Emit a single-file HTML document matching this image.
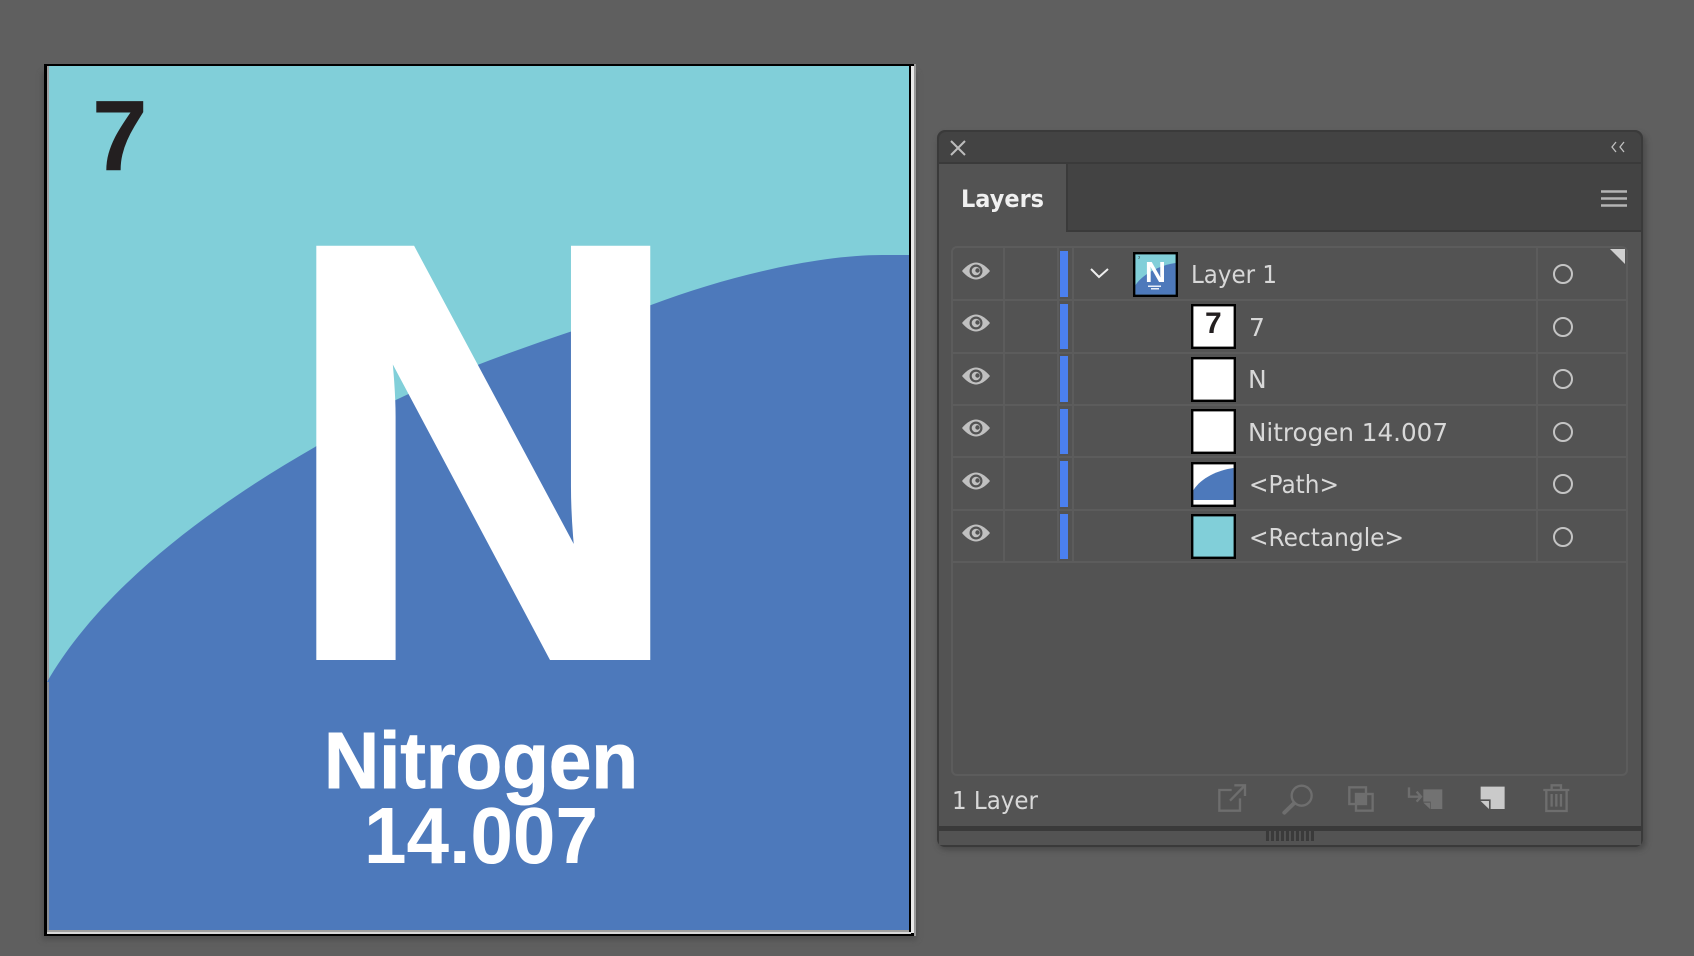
<!DOCTYPE html>
<html><head><meta charset="utf-8"><title>Layers</title>
<style>
html,body{margin:0;padding:0;width:1694px;height:956px;overflow:hidden;background:#5f5f5f}
svg{display:block}
.t{font-family:"DejaVu Sans",sans-serif;font-size:25px;fill:#d8d8d8}
.a{font-family:"Liberation Sans",Arial,sans-serif;font-weight:700;fill:#fff}
</style></head><body>
<svg width="1694" height="956" viewBox="0 0 1694 956" xmlns="http://www.w3.org/2000/svg">
<defs>
<filter id="b" x="-5%" y="-5%" width="110%" height="110%"><feGaussianBlur stdDeviation="3"/></filter>
<g id="eye">
<path d="M-14 0C-9-6-4-8.500 0-8.500S9-6 14 0C9 6 4 8.500 0 8.500S-9 6-14 0Z" fill="#c0c0c0"/>
<circle r="6.500" fill="#535353"/>
<circle r="4.300" fill="#c0c0c0"/>
<circle cx="1.500" cy="-0.500" r="2.200" fill="#535353"/>
</g>
<path id="curve" d="M47 682C100 590 205 510 315 447C400 385 545 340 651 305C730 275 820 255 882 255L909 255V931H47Z"/>
</defs>
<rect width="1694" height="956" fill="#5f5f5f"/>

<!-- artboard -->
<rect x="42" y="72" width="875" height="868" fill="#4a4a4a" filter="url(#b)" opacity=".7"/>
<rect x="44" y="64" width="871" height="872" fill="#000"/>
<rect x="911" y="66" width="3" height="867" fill="#e8e8e8"/>
<rect x="914" y="64" width="2" height="872" fill="#9a9a9a"/>
<rect x="47" y="66" width="862" height="865" fill="#81cfd9"/>
<rect x="47" y="66" width="2" height="865" fill="#a0a0a0"/>
<rect x="47" y="932" width="864" height="2" fill="#d8d8d8"/>
<use href="#curve" fill="#4d79bb"/>
<rect x="47" y="682" width="2" height="249" fill="#8b8f96"/>
<rect x="47" y="930" width="862" height="2" fill="#a0a0a0"/>
<text class="a" x="92" y="170" font-size="100" style="fill:#231f20">7</text>
<text class="a" transform="translate(283.500,655.500) scale(.94,1)" font-size="589" stroke="#fff" stroke-width="9" stroke-linejoin="miter">N</text>
<text class="a" x="324" y="788" font-size="80" textLength="314" lengthAdjust="spacingAndGlyphs" stroke="#fff" stroke-width="1">Nitrogen</text>
<text class="a" x="364" y="863" font-size="80" textLength="234" lengthAdjust="spacingAndGlyphs">14.007</text>

<!-- panel -->
<rect x="938" y="134" width="708" height="716" rx="8" fill="#3a3a3a" filter="url(#b)" opacity=".6"/>
<rect x="937" y="130" width="706" height="717" rx="8" fill="#3a3a3a"/>
<path d="M939 139a7 7 0 0 1 7-7H1634a7 7 0 0 1 7 7V162H939Z" fill="#434343"/>
<rect x="939" y="162" width="702" height="2" fill="#3a3a3a"/>
<rect x="939" y="164" width="702" height="662" fill="#535353"/>
<rect x="1067" y="164" width="574" height="66" fill="#434343"/>
<rect x="1066" y="164" width="2" height="68" fill="#3a3a3a"/>
<rect x="1066" y="230" width="575" height="2" fill="#3a3a3a"/>
<rect x="939" y="831" width="702" height="14" fill="#535353"/>
<rect x="937" y="826" width="706" height="5" fill="#3a3a3a"/>

<path d="M951 141L965 155M965 141L951 155" stroke="#bdbdbd" stroke-width="2" fill="none"/>
<path d="M1616 142L1612 147L1616 152M1624 142L1620 147L1624 152" stroke="#c0c0c0" stroke-width="1.300" fill="none"/>
<path d="M1601 191.500H1627M1601 198.500H1627M1601 205.500H1627" stroke="#b4b4b4" stroke-width="2.400" fill="none"/>
<text class="t" x="961" y="207" style="font-weight:700;fill:#f0f0f0;font-size:24px" textLength="83" lengthAdjust="spacingAndGlyphs">Layers</text>

<!-- list -->
<rect x="952" y="247" width="675" height="528" rx="5" fill="#535353" stroke="#5c5c5c" stroke-width="2"/>
<g fill="#5c5c5c">
<rect x="952" y="299" width="675" height="2"/><rect x="952" y="352" width="675" height="2"/><rect x="952" y="404" width="675" height="2"/><rect x="952" y="456" width="675" height="2"/><rect x="952" y="509" width="675" height="2"/><rect x="952" y="561" width="675" height="2"/>
<rect x="1003" y="248" width="2" height="314"/><rect x="1057" y="248" width="2" height="314"/><rect x="1072" y="248" width="2" height="314"/><rect x="1536" y="248" width="2" height="314"/>
</g>
<g fill="#4b80f0">
<rect x="1060" y="251" width="8" height="46"/><rect x="1060" y="304" width="8" height="45"/><rect x="1060" y="356" width="8" height="46"/><rect x="1060" y="409" width="8" height="45"/><rect x="1060" y="461" width="8" height="46"/><rect x="1060" y="514" width="8" height="45"/>
</g>
<use href="#eye" x="976" y="271"/><use href="#eye" x="976" y="323"/><use href="#eye" x="976" y="376"/><use href="#eye" x="976" y="428"/><use href="#eye" x="976" y="481"/><use href="#eye" x="976" y="533"/>
<g fill="none" stroke="#c4c4c4" stroke-width="2">
<circle cx="1563" cy="274" r="9"/><circle cx="1563" cy="327" r="9"/><circle cx="1563" cy="379" r="9"/><circle cx="1563" cy="432" r="9"/><circle cx="1563" cy="484" r="9"/><circle cx="1563" cy="537" r="9"/>
</g>
<path d="M1610 249H1625V264Z" fill="#cfcfcf"/>
<path d="M1091 269L1099 277L1108 269" fill="none" stroke="#eee" stroke-width="2"/>

<!-- thumbnails -->
<rect x="1134.200" y="253.200" width="42.600" height="42.600" fill="#81cfd9" stroke="#000" stroke-width="2.400"/>
<path d="M1135.500 285C1143 274 1160 265 1175.500 263V294.500H1135.500Z" fill="#4d79bb"/>
<text x="1138" y="259" font-size="4" fill="#333" font-family="Liberation Sans,sans-serif" font-weight="700">7</text>
<text class="a" x="1145" y="282" font-size="29">N</text>
<rect x="1148" y="285.500" width="13" height="1.500" fill="#e8eef8"/><rect x="1151" y="288" width="8" height="1.500" fill="#e8eef8"/>
<rect x="1192.200" y="305.200" width="42.600" height="42.600" fill="#fff" stroke="#000" stroke-width="2.400"/>
<text class="a" x="1205" y="333" font-size="30" style="fill:#231f20">7</text>
<rect x="1192.200" y="358.200" width="42.600" height="42.600" fill="#fff" stroke="#000" stroke-width="2.400"/>
<rect x="1192.200" y="410.200" width="42.600" height="42.600" fill="#fff" stroke="#000" stroke-width="2.400"/>
<rect x="1192.200" y="463.200" width="42.600" height="42.600" fill="#fff" stroke="#000" stroke-width="2.400"/>
<path d="M1193.500 490C1201 478 1218 470 1233.500 468V500H1193.500Z" fill="#4d79bb"/>
<rect x="1192.200" y="515.200" width="42.600" height="42.600" fill="#81cfd9" stroke="#000" stroke-width="2.400"/>

<!-- labels -->
<text class="t" x="1191" y="283" textLength="86" lengthAdjust="spacingAndGlyphs">Layer 1</text>
<text class="t" x="1249" y="336">7</text>
<text class="t" x="1248" y="388">N</text>
<text class="t" x="1248" y="441" textLength="200" lengthAdjust="spacingAndGlyphs">Nitrogen 14.007</text>
<text class="t" x="1249" y="493" textLength="90" lengthAdjust="spacingAndGlyphs">&lt;Path&gt;</text>
<text class="t" x="1249" y="546" textLength="155" lengthAdjust="spacingAndGlyphs">&lt;Rectangle&gt;</text>
<text class="t" x="952" y="809" textLength="86" lengthAdjust="spacingAndGlyphs">1 Layer</text>

<!-- footer icons: coordinates are 3x from (1190,760) -->
<g transform="translate(1190,760) scale(.3333)" fill="none" stroke="#6e6e6e" stroke-width="7">
<path d="M125 90H88V152H150V115M120 122L163 78M133 76H165V108"/>
<circle cx="335" cy="107" r="30"/><path d="M283 158L312 130" stroke-width="12" stroke-linecap="round"/>
<rect x="478" y="82" width="50" height="50"/><rect x="498" y="102" width="50" height="50"/><rect x="498" y="102" width="32" height="30" fill="#6e6e6e" stroke="none"/>
<path d="M657 82V110H690M680 95L693 110L680 125"/>
<path d="M700 88H757V147H722V125H700Z" fill="#727272" stroke="none"/><path d="M700 128H720V147Z" fill="#727272" stroke="none"/>
<path d="M872 80H944V147H902V118H872Z" fill="#cacaca" stroke="none"/><path d="M872 123H897V147Z" fill="#cacaca" stroke="none"/>
<path d="M1060 90H1138M1085 88V76H1113V88M1069 90V153H1130V90M1085 102V140M1099 102V140M1113 102V140"/>
<g fill="#3a3a3a" stroke="none">
<rect x="228" y="213" width="9" height="30"/><rect x="243" y="213" width="9" height="30"/><rect x="258" y="213" width="9" height="30"/><rect x="273" y="213" width="9" height="30"/><rect x="288" y="213" width="9" height="30"/><rect x="303" y="213" width="9" height="30"/><rect x="318" y="213" width="9" height="30"/><rect x="333" y="213" width="9" height="30"/><rect x="348" y="213" width="9" height="30"/><rect x="363" y="213" width="9" height="30"/>
</g>
</g>
</svg>
</body></html>
